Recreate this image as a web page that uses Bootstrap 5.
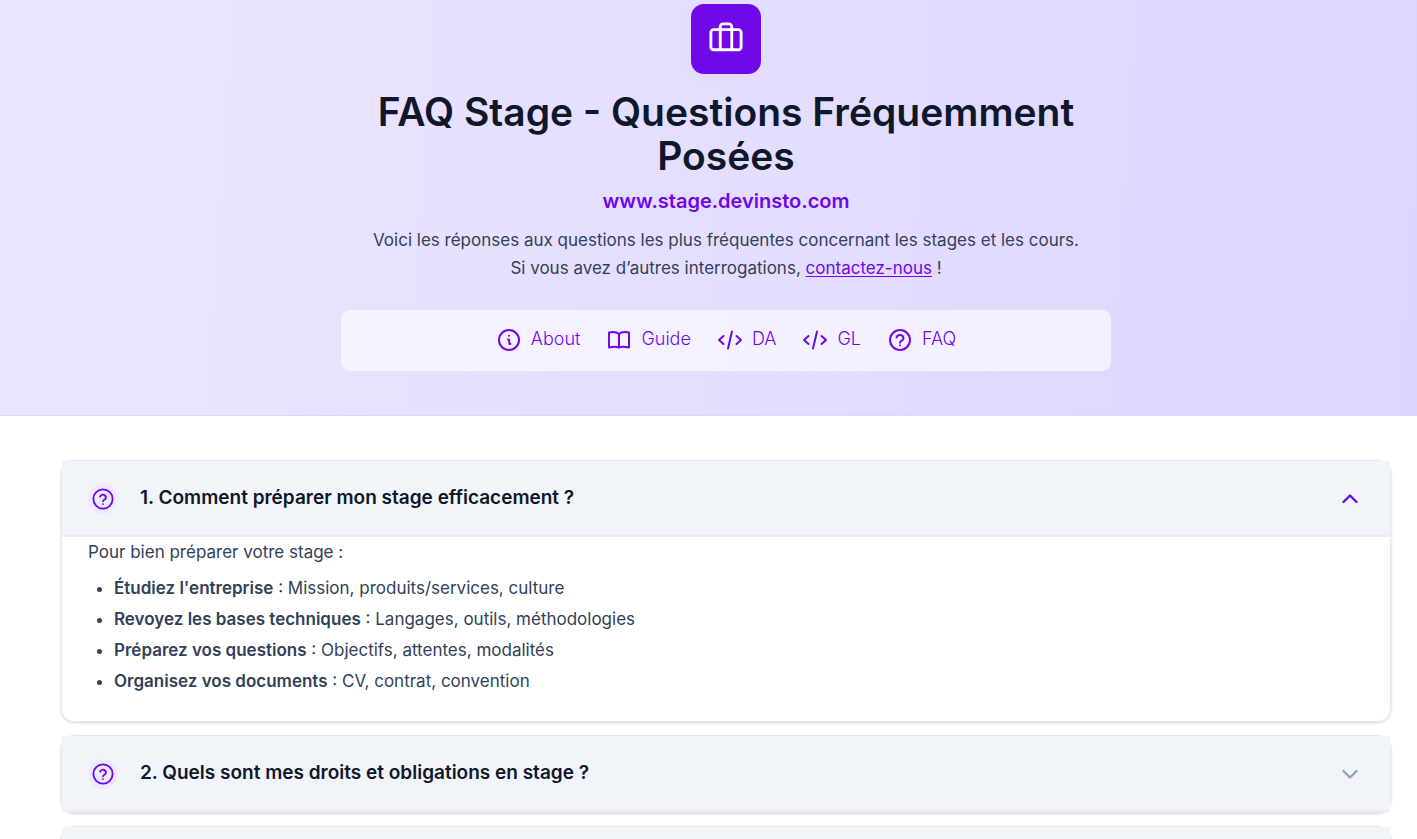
<!DOCTYPE html>
<html lang="fr">
<head>
<meta charset="utf-8">
<meta name="viewport" content="width=device-width, initial-scale=1">
<title>FAQ Stage - Questions Fréquemment Posées</title>
<link href="https://cdn.jsdelivr.net/npm/bootstrap@5.3.0/dist/css/bootstrap.min.css" rel="stylesheet">
<style>
  :root { --violet: #7008e7; --violet-soft: #ede9fe; --ink: #0f172b; --slate: #314158; --line: #e2e8f0; }
  html { scrollbar-width: none; }
  body { font-family: Inter, sans-serif; font-size: 17px; color: var(--slate); background: #fff; }
  body, .faq-page { height: 100vh; overflow: hidden; }
  .page-gutter { padding-left: 61px; padding-right: 26px; }
  .hero { background: linear-gradient(94deg, #ebe6ff, #ddd6ff); border-bottom: 1px solid #ddd6ff; padding-top: 4px; padding-bottom: 44px; }
  .hero-inner { max-width: 770px; }
  .hero-logo { width: 70px; height: 70px; border-radius: 13px; background: var(--violet); box-shadow: 0 4px 12px rgba(112, 8, 231, .03); color: #fff; margin-bottom: 16px; }
  .hero h1 { font-size: 39px; line-height: 44px; font-weight: 600; color: var(--ink); margin-bottom: 8px; }
  .hero-site { font-size: 20px; line-height: 30px; font-weight: 600; color: var(--violet); margin-bottom: 10px; }
  .hero-text { line-height: 28px; margin-bottom: 28px; }
  .hero-text a { color: var(--violet); text-underline-offset: 2px; }
  .hero-nav { background: rgba(255, 255, 255, .6); border-radius: 9px; padding: 16px; column-gap: 26px; }
  .hero-nav a { color: var(--violet); font-size: 18px; line-height: 26px; font-weight: 300; gap: 9px; height: 29px; text-decoration: none; }
  .hero-nav svg { margin-top: 1px; }
  svg { fill: none; stroke: currentColor; stroke-width: 2; stroke-linecap: round; stroke-linejoin: round; flex: none; }
  .faq-list { padding-top: 44px; gap: 13px; }
  .faq-card { border: 1px solid var(--line); border-radius: 13px; box-shadow: 0 1px 3px rgba(0, 0, 0, .1), 0 1px 2px rgba(0, 0, 0, .08); }
  .faq-card h2 { margin: 0; }
  .faq-toggle { border: 0; border-bottom: 2px solid var(--violet-soft); background: #f1f5f9; height: 76px; padding: 1px 26px 0; gap: 22px; color: var(--ink); font-size: 19px; font-weight: 600; }
  .faq-mark { width: 30px; height: 30px; background: var(--violet-soft); color: var(--violet); }
  .faq-chevron { color: var(--violet); stroke-width: 2.4; }
  .faq-toggle.collapsed .faq-chevron { color: #90a1b9; transform: rotate(180deg); }
  .faq-answer { padding: 0 26px 24px; line-height: 31px; }
  .faq-answer p { margin-bottom: 5px; }
  .faq-answer ul { margin: 0; padding-left: 26px; }
  .faq-answer strong { font-weight: 600; }
</style>
</head>
<body>
<svg class="d-none" aria-hidden="true">
  <symbol id="i-help" viewBox="0 0 24 24"><circle cx="12" cy="12" r="10.5"/><path d="M8.800 9.500a3.300 3.300 0 0 1 6.400 1c0 2-3.200 2.400-3.200 4M12 17.500h.01"/></symbol>
  <symbol id="i-help-nav" viewBox="0 0 26 26"><circle cx="13" cy="13" r="10"/><path d="M9.500 10.500a3.600 3.600 0 0 1 7 1c0 2-3.500 2.200-3.500 4.300M13 18.600h.01"/></symbol>
  <symbol id="i-code" viewBox="0 0 26 26"><path d="M6.500 9 2 13l4.500 4M19.500 9 24 13l-4.500 4M15 4.500 11 21.500"/></symbol>
  <symbol id="i-chevron" viewBox="0 0 28 28"><path d="m7.500 17 6.500-6.500 6.500 6.500"/></symbol>
</svg>
<div class="faq-page">
<header class="hero page-gutter">
  <div class="hero-inner mx-auto text-center">
    <div class="hero-logo d-flex align-items-center justify-content-center mx-auto">
      <svg width="36" height="36" viewBox="0 0 25 25"><rect x="2" y="6" width="21" height="14" rx="2"/><path d="M16.500 20V4a2 2 0 0 0-2-2h-4a2 2 0 0 0-2 2v16"/></svg>
    </div>
    <h1>FAQ Stage - Questions Fréquemment Posées</h1>
    <div class="hero-site">www.stage.devinsto.com</div>
    <p class="hero-text">Voici les réponses aux questions les plus fréquentes concernant les stages et les cours.<br>Si vous avez d’autres interrogations, <a href="#contact">contactez-nous</a> !</p>
    <nav class="hero-nav d-flex flex-wrap justify-content-center">
      <a href="#about" class="d-flex"><svg width="26" height="26" viewBox="0 0 26 26"><circle cx="13" cy="13" r="10"/><path d="M12 12.500h1l.5 4.500h1M13 8.800h.01"/></svg>About</a>
      <a href="#guide" class="d-flex"><svg width="26" height="26" viewBox="0 0 26 26"><path d="M13 7c-2-2-6-2.300-10-1.500V20.500c4-1 8-1 10 0 2-1 6-1 10 0V5.500C19 4.700 15 5 13 7v13.500"/></svg>Guide</a>
      <a href="#da" class="d-flex"><svg width="26" height="26"><use href="#i-code"/></svg>DA</a>
      <a href="#gl" class="d-flex"><svg width="26" height="26"><use href="#i-code"/></svg>GL</a>
      <a href="#faq" class="d-flex"><svg width="26" height="26"><use href="#i-help-nav"/></svg>FAQ</a>
    </nav>
  </div>
</header>
<main class="faq-list page-gutter d-flex flex-column" id="faq">
  <section class="faq-card">
    <h2><button class="faq-toggle w-100 d-flex align-items-center text-start" type="button" data-bs-toggle="collapse" data-bs-target="#answer1" aria-expanded="true" aria-controls="answer1">
      <span class="faq-mark rounded-circle d-flex align-items-center justify-content-center"><svg width="22" height="22"><use href="#i-help"/></svg></span>
      <span class="flex-grow-1">1. Comment préparer mon stage efficacement ?</span>
      <svg class="faq-chevron" width="28" height="28"><use href="#i-chevron"/></svg>
    </button></h2>
    <div id="answer1" class="collapse show">
      <div class="faq-answer">
        <p>Pour bien préparer votre stage :</p>
        <ul>
          <li><strong>Étudiez l'entreprise</strong> : Mission, produits/services, culture</li>
          <li><strong>Revoyez les bases techniques</strong> : Langages, outils, méthodologies</li>
          <li><strong>Préparez vos questions</strong> : Objectifs, attentes, modalités</li>
          <li><strong>Organisez vos documents</strong> : CV, contrat, convention</li>
        </ul>
      </div>
    </div>
  </section>
  <section class="faq-card">
    <h2><button class="faq-toggle collapsed w-100 d-flex align-items-center text-start" type="button" aria-expanded="false">
      <span class="faq-mark rounded-circle d-flex align-items-center justify-content-center"><svg width="22" height="22"><use href="#i-help"/></svg></span>
      <span class="flex-grow-1">2. Quels sont mes droits et obligations en stage ?</span>
      <svg class="faq-chevron" width="28" height="28"><use href="#i-chevron"/></svg>
    </button></h2>
  </section>
  <section class="faq-card">
    <h2><button class="faq-toggle collapsed w-100 d-flex align-items-center" type="button" aria-expanded="false" aria-label="Question 3"></button></h2>
  </section>
</main>
</div>
<script src="https://cdn.jsdelivr.net/npm/bootstrap@5.3.0/dist/js/bootstrap.bundle.min.js"></script>
</body>
</html>
